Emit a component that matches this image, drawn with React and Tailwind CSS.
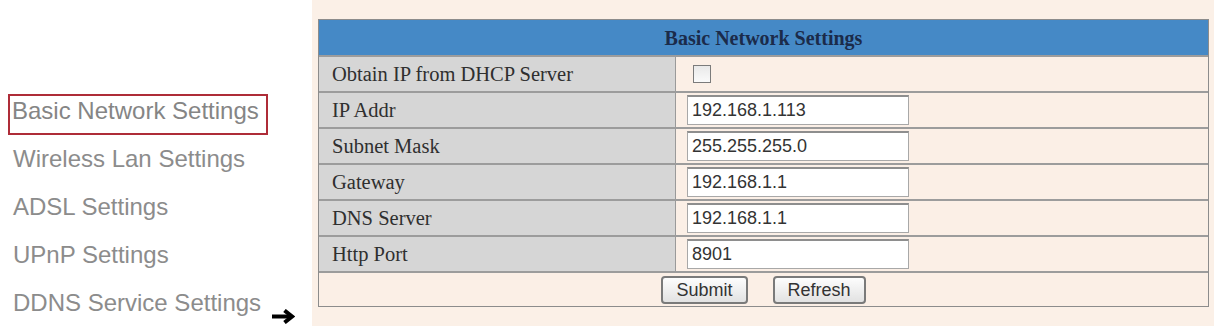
import React from "react";

const menu = ["Wireless Lan Settings", "ADSL Settings", "UPnP Settings"];

const rows = [
  { label: "IP Addr", value: "192.168.1.113" },
  { label: "Subnet Mask", value: "255.255.255.0" },
  { label: "Gateway", value: "192.168.1.1" },
  { label: "DNS Server", value: "192.168.1.1" },
  { label: "Http Port", value: "8901" },
];

const Arrow = () => (
  <svg
    width="23"
    height="15"
    viewBox="0 0 23 15"
    className="inline-block ml-[11px] align-[-13px]"
  >
    <line x1="0" y1="7.5" x2="20" y2="7.5" stroke="#000" strokeWidth="4" />
    <polyline
      points="12.5,1.5 20,7.5 12.5,13.5"
      fill="none"
      stroke="#000"
      strokeWidth="4"
      strokeLinejoin="miter"
    />
  </svg>
);

const Row = ({ label, children }) => (
  <div className="flex h-[36px] border-t-2 border-[#9c9c9c]">
    <div className="w-[357px] shrink-0 flex items-center pl-[13px] bg-[#d6d6d6] border-r border-[#9a9a9a] text-[20.5px] text-[#2f2f2f]">
      {label}
    </div>
    <div className="flex-1 flex items-center pl-[11px] bg-[#fbefe6]">
      {children}
    </div>
  </div>
);

const Button = ({ children }) => (
  <button className="h-[28px] px-[13px] border-2 border-[#7a7a7a] rounded-[4px] bg-gradient-to-b from-[#fdfdfd] to-[#e2e2e2] font-['Liberation_Sans',Arial,sans-serif] text-[18px] leading-none text-[#333]">
    {children}
  </button>
);

export default function App() {
  return (
    <div className="flex w-[1214px] h-[329px] bg-white overflow-hidden">
      {/* left menu */}
      <div className="w-[312px] shrink-0 pt-[87px] pl-[8px] font-['Liberation_Sans',Arial,sans-serif] text-[24px] text-[#8c8c8c] whitespace-nowrap">
        <div className="h-[48px] pt-[7px]">
          <div className="w-[260px] h-[41px] border-[2.5px] border-[#ae2c38] pl-[2px] pt-[1px] leading-[28px] text-[#858585]">
            Basic Network Settings
          </div>
        </div>
        {menu.map((m) => (
          <div key={m} className="h-[48px] leading-[48px] pl-[5px]">
            {m}
          </div>
        ))}
        <div className="h-[48px] leading-[48px] pl-[5px]">
          DDNS Service Settings
          <Arrow />
        </div>
      </div>

      {/* settings panel */}
      <div className="flex-1 h-[326px] bg-[#fbf0e7] pl-[6px] pt-[19px] font-['Liberation_Serif','Times_New_Roman',serif]">
        <div className="w-[891px] border border-[#8c8c8c]">
          <div className="h-[35px] flex items-center justify-center bg-[#4589c6] text-[20px] font-bold text-[#1b2b4a]">
            Basic Network Settings
          </div>
          <Row label="Obtain IP from DHCP Server">
            <span className="ml-[6px] block w-[18px] h-[18px] border-[1.5px] border-[#7b7b7b] bg-gradient-to-b from-[#e9e9e9] to-[#fafafa]" />
          </Row>
          {rows.map((r) => (
            <Row key={r.label} label={r.label}>
              <div className="w-[222px] h-[30px] flex items-center pl-[4px] bg-white border border-[#a8a8a8] border-t-2 border-t-[#8e8e8e] font-['Liberation_Sans',Arial,sans-serif] text-[18px] text-[#333]">
                {r.value}
              </div>
            </Row>
          ))}
          <div className="h-[35px] flex items-center justify-center gap-[25px] border-t-2 border-[#9c9c9c] bg-[#fbefe6]">
            <Button>Submit</Button>
            <Button>Refresh</Button>
          </div>
        </div>
      </div>
    </div>
  );
}
